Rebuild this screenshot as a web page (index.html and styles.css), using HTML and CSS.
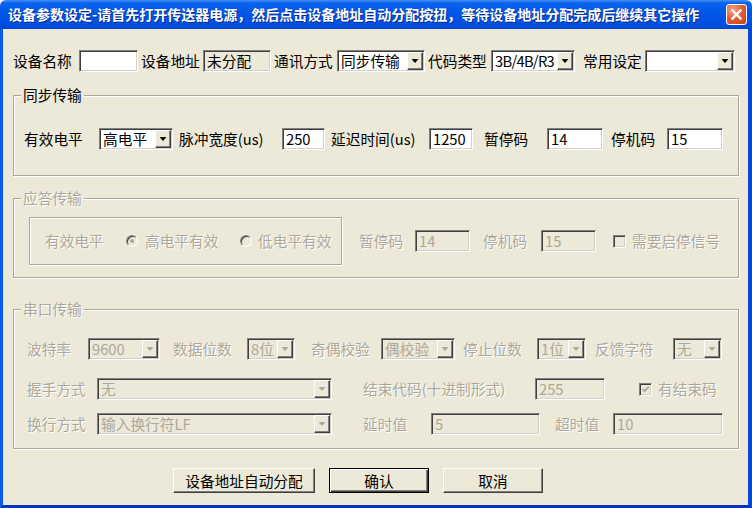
FILE: index.html
```html
<!DOCTYPE html>
<html lang="zh-CN">
<head>
    <meta charset="UTF-8">
    <title>设备参数设定</title>
    <link rel="stylesheet" href="styles.css">
</head>
<body>
<div class="window">
    <div class="titlebar">
        <span class="title">设备参数设定-请首先打开传送器电源，然后点击设备地址自动分配按扭，等待设备地址分配完成后继续其它操作</span>
        <span class="close">
            <svg width="19" height="19" viewBox="0 0 19 19"><path d="M5.5 5.5 L13.5 13.5 M13.5 5.5 L5.5 13.5" stroke="#fff" stroke-width="2.4" stroke-linecap="square"/></svg>
        </span>
    </div>
    <div class="client">
        <div class="row row-top">
            <span>设备名称</span>
            <span class="field w59"></span>
            <span>设备地址</span>
            <span class="field readonly w68">未分配</span>
            <span>通讯方式</span>
            <span class="combo w88"><span class="val">同步传输</span><span class="arrow"></span></span>
            <span>代码类型</span>
            <span class="combo w84"><span class="val tight">3B/4B/R3</span><span class="arrow"></span></span>
            <span>常用设定</span>
            <span class="combo w90"><span class="val"></span><span class="arrow"></span></span>
        </div>

        <div class="group group-sync">
            <div class="legend">同步传输</div>
            <div class="row row-sync">
                <span>有效电平</span>
                <span class="combo w74"><span class="val">高电平</span><span class="arrow"></span></span>
                <span>脉冲宽度(us)</span>
                <span class="field w43">250</span>
                <span>延迟时间(us)</span>
                <span class="field w44">1250</span>
                <span>暂停码</span>
                <span class="field w56">14</span>
                <span>停机码</span>
                <span class="field w56">15</span>
            </div>
        </div>

        <div class="group group-ack">
            <div class="legend dis">应答传输</div>
            <div class="row row-ack">
                <div class="subbox">
                    <span class="dis">有效电平</span>
                    <span class="radio on"></span>
                    <span class="dis">高电平有效</span>
                    <span class="radio"></span>
                    <span class="dis">低电平有效</span>
                </div>
                <span class="dis">暂停码</span>
                <span class="field off w55">14</span>
                <span class="dis">停机码</span>
                <span class="field off w55">15</span>
                <span class="check"></span>
                <span class="dis">需要启停信号</span>
            </div>
        </div>

        <div class="group group-serial">
            <div class="legend dis">串口传输</div>
            <div class="row row-s1">
                <span class="dis">波特率</span>
                <span class="combo off w72"><span class="val">9600</span><span class="arrow"></span></span>
                <span class="dis">数据位数</span>
                <span class="combo off w48"><span class="val">8位</span><span class="arrow"></span></span>
                <span class="dis">奇偶校验</span>
                <span class="combo off w74"><span class="val">偶校验</span><span class="arrow"></span></span>
                <span class="dis">停止位数</span>
                <span class="combo off w49"><span class="val">1位</span><span class="arrow"></span></span>
                <span class="dis">反馈字符</span>
                <span class="combo off w49"><span class="val">无</span><span class="arrow"></span></span>
            </div>
            <div class="row row-s2">
                <span class="dis">握手方式</span>
                <span class="combo off w235"><span class="val">无</span><span class="arrow"></span></span>
                <span class="dis">结束代码(十进制形式)</span>
                <span class="field off w70">255</span>
                <span class="check">
                    <svg width="9" height="9" viewBox="0 0 9 9"><path d="M1.5 4 L3.5 6.2 L7.8 1.8" fill="none" stroke="#aca899" stroke-width="1.8"/></svg>
                </span>
                <span class="dis">有结束码</span>
            </div>
            <div class="row row-s3">
                <span class="dis">换行方式</span>
                <span class="combo off w235"><span class="val">输入换行符LF</span><span class="arrow"></span></span>
                <span class="dis">延时值</span>
                <span class="field off w109">5</span>
                <span class="dis">超时值</span>
                <span class="field off w110">10</span>
            </div>
        </div>

        <div class="buttons">
            <button class="btn btn-wide">设备地址自动分配</button>
            <button class="btn btn-default">确认</button>
            <button class="btn">取消</button>
        </div>
    </div>
</div>
</body>
</html>
```

FILE: styles.css
```css
* {
    box-sizing: border-box;
}
body {
    margin: 0;
    background: #f4f4f4;
    font-family: "Noto Sans CJK SC", sans-serif;
    font-size: 14.7px;
    line-height: 1.2;
    color: #000;
}
.window {
    width: 752px;
    height: 508px;
    display: flex;
    flex-direction: column;
}

/* title bar */
.titlebar {
    height: 29px;
    flex: none;
    display: flex;
    align-items: center;
    justify-content: space-between;
    padding: 0 5px 0 8px;
    border-radius: 6px 6px 0 0;
    background: linear-gradient(#4a90f6 0, #0a63ee 3px, #0058e8 40%, #0050e2 80%, #0046d4 100%);
    color: #fff;
}
.title {
    font-size: 14px;
    font-weight: bold;
    line-height: 1.3;
    white-space: nowrap;
    text-shadow: 1px 1px 0 #0b2c8c;
}
.close {
    width: 21px;
    height: 21px;
    display: flex;
    align-items: center;
    justify-content: center;
    border: 1px solid #fff;
    border-radius: 3px;
    background: radial-gradient(circle at 30% 25%, #f7a28a 0, #e5603a 45%, #c9401a 100%);
}

/* dialog area */
.client {
    flex: 1;
    background: #ece9d8;
    border-left: 3px solid #0a5cee;
    border-right: 4px solid #0846d8;
    border-bottom: 3px solid #0833c4;
    padding: 21px 0 0 10px;
}
.row {
    display: grid;
    align-items: center;
    height: 22px;
}
.row-top {
    grid-template-columns: 66px 62px 62px 71px 63px 91px 63px 92px 62px 90px;
}
.dis {
    color: #aca899;
    text-shadow: 1px 1px 0 #fff;
}

/* group boxes */
.group {
    width: 726px;
    border: 1px solid #aca899;
    box-shadow: 1px 1px 0 #fff, inset 1px 1px 0 #fff;
}
.legend {
    width: fit-content;
    margin: -9px 0 0 7px;
    padding: 0 2px;
    line-height: 16px;
    background: #ece9d8;
}
.group-sync {
    margin-top: 23px;
    padding-bottom: 25px;
}
.row-sync {
    margin-top: 25px;
    padding-left: 10px;
    grid-template-columns: 75px 80px 103px 49px 98px 55px 63px 64px 56px 56px;
}
.group-ack {
    margin-top: 22px;
    padding-bottom: 12px;
}
.row-ack {
    height: 48px;
    margin-top: 11px;
    padding-left: 15px;
    grid-template-columns: 330px 56px 68px 58px 72px 19px auto;
}
.subbox {
    width: 313px;
    height: 48px;
    display: grid;
    align-items: center;
    grid-template-columns: 81px 19px 95px 18px auto;
    padding-left: 15px;
    border: 1px solid #aca899;
    box-shadow: 1px 1px 0 #fff, inset 1px 1px 0 #fff;
}
.group-serial {
    margin-top: 31px;
    padding-bottom: 13px;
}
.group-serial .row {
    padding-left: 13px;
}
.row-s1 {
    margin-top: 21px;
    grid-template-columns: 61px 85px 74px 64px 70px 82px 74px 58px 78px 49px;
}
.row-s2 {
    margin-top: 18px;
    grid-template-columns: 70px 266px 172px 104px 19px auto;
}
.row-s3 {
    margin-top: 13px;
    grid-template-columns: 70px 266px 68px 124px 58px 110px;
}

/* edit boxes and combos */
.field, .combo {
    height: 22px;
    border: 1px solid;
    border-color: #808080 #fff #fff #808080;
    box-shadow: inset 1px 1px 0 #404040, inset -1px -1px 0 #d4d0c8;
    background: #fff;
    white-space: nowrap;
}
.field {
    padding: 0 3px;
    line-height: 20px;
}
.readonly, .off {
    background: #ece9d8;
}
.field.off, .combo.off .val {
    color: #aca899;
}
.combo {
    display: flex;
    align-items: center;
    padding: 1px;
}
.val {
    flex: 1;
    min-width: 0;
    padding-left: 2px;
    line-height: 18px;
}
.tight {
    letter-spacing: -0.7px;
}
.arrow {
    width: 16px;
    height: 18px;
    flex: none;
    display: flex;
    align-items: center;
    justify-content: center;
    background: #ece9d8;
    border: 1px solid;
    border-color: #fff #404040 #404040 #fff;
    box-shadow: inset -1px -1px 0 #808080;
}
.arrow::after {
    content: "";
    width: 7px;
    height: 4px;
    background: #000;
    clip-path: polygon(0 0, 100% 0, 50% 100%);
}
.combo.off .arrow::after {
    background: #aca899;
}
.w43 { width: 43px; }
.w44 { width: 44px; }
.w48 { width: 48px; }
.w49 { width: 49px; }
.w55 { width: 55px; }
.w56 { width: 56px; }
.w59 { width: 59px; }
.w68 { width: 68px; }
.w70 { width: 70px; }
.w72 { width: 72px; }
.w74 { width: 74px; }
.w84 { width: 84px; }
.w88 { width: 88px; }
.w90 { width: 90px; }
.w109 { width: 109px; }
.w110 { width: 110px; }
.w235 { width: 235px; }

/* radio and check */
.radio {
    width: 12px;
    height: 12px;
    display: flex;
    align-items: center;
    justify-content: center;
    border-radius: 50%;
    border: 1px solid;
    border-color: #808080 #fff #fff #808080;
    box-shadow: inset 1px 1px 0 #404040;
    background: #ece9d8;
}
.radio.on::after {
    content: "";
    width: 4px;
    height: 4px;
    border-radius: 50%;
    background: #aca899;
}
.check {
    width: 13px;
    height: 13px;
    display: flex;
    align-items: center;
    justify-content: center;
    border: 1px solid;
    border-color: #808080 #fff #fff #808080;
    box-shadow: inset 1px 1px 0 #404040, inset -1px -1px 0 #d4d0c8;
    background: #ece9d8;
}

/* buttons */
.buttons {
    display: flex;
    gap: 14px;
    margin-top: 19px;
    padding-left: 160px;
}
.btn {
    width: 100px;
    height: 25px;
    padding: 0;
    font: inherit;
    color: #000;
    background: #ece9d8;
    border: 1px solid;
    border-color: #fff #404040 #404040 #fff;
    box-shadow: inset -1px -1px 0 #808080;
}
.btn-wide {
    width: 142px;
}
.btn-default {
    border-color: #000;
    box-shadow: inset 1px 1px 0 #fff, inset -1px -1px 0 #404040, inset -2px -2px 0 #808080;
}
```
